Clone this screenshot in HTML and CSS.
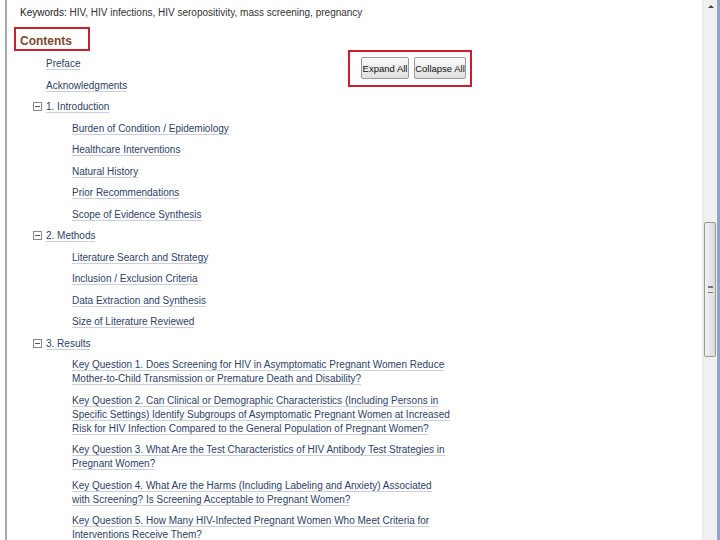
FILE: index.html
```html
<!DOCTYPE html>
<html lang="en">
<head>
<meta charset="utf-8" />
<title>Contents</title>
<link rel="stylesheet" href="styles.css">
</head>
<body>
<div class="window">
	<div class="page">
		<p class="keywords"><span class="kw_label">Keywords:</span> HIV, HIV infections, HIV seropositivity, mass screening, pregnancy</p>
		<div class="toc_area">
			<h2 class="contents_title">Contents</h2>
			<!-- S 展开/折叠 -->
			<div class="toc_tools">
				<button class="bt_tool bt_expand">Expand All</button>
				<button class="bt_tool bt_collapse">Collapse All</button>
			</div>
			<!-- E 展开/折叠 -->
			<ul class="toc">
				<li><a href="#">Preface</a></li>
				<li><a href="#">Acknowledgments</a></li>
				<li class="open"><span class="toggle"><svg width="9" height="9" viewBox="0 0 9 9"><rect x="0.5" y="0.5" width="8" height="8" fill="#fff" stroke="#8a8a8a"/><path d="M2 4.5h5" stroke="#555"/></svg></span><a href="#">1. Introduction</a>
					<ul class="toc_sub">
						<li><a href="#">Burden of Condition / Epidemiology</a></li>
						<li><a href="#">Healthcare Interventions</a></li>
						<li><a href="#">Natural History</a></li>
						<li><a href="#">Prior Recommendations</a></li>
						<li><a href="#">Scope of Evidence Synthesis</a></li>
					</ul>
				</li>
				<li class="open"><span class="toggle"><svg width="9" height="9" viewBox="0 0 9 9"><rect x="0.5" y="0.5" width="8" height="8" fill="#fff" stroke="#8a8a8a"/><path d="M2 4.5h5" stroke="#555"/></svg></span><a href="#">2. Methods</a>
					<ul class="toc_sub">
						<li><a href="#">Literature Search and Strategy</a></li>
						<li><a href="#">Inclusion / Exclusion Criteria</a></li>
						<li><a href="#">Data Extraction and Synthesis</a></li>
						<li><a href="#">Size of Literature Reviewed</a></li>
					</ul>
				</li>
				<li class="open"><span class="toggle"><svg width="9" height="9" viewBox="0 0 9 9"><rect x="0.5" y="0.5" width="8" height="8" fill="#fff" stroke="#8a8a8a"/><path d="M2 4.5h5" stroke="#555"/></svg></span><a href="#">3. Results</a>
					<ul class="toc_sub">
						<li><a href="#">Key Question 1. Does Screening for HIV in Asymptomatic Pregnant Women Reduce Mother-to-Child Transmission or Premature Death and Disability?</a></li>
						<li><a href="#">Key Question 2. Can Clinical or Demographic Characteristics (Including Persons in Specific Settings) Identify Subgroups of Asymptomatic Pregnant Women at Increased Risk for HIV Infection Compared to the General Population of Pregnant Women?</a></li>
						<li><a href="#">Key Question 3. What Are the Test Characteristics of HIV Antibody Test Strategies in Pregnant Women?</a></li>
						<li><a href="#">Key Question 4. What Are the Harms (Including Labeling and Anxiety) Associated with Screening? Is Screening Acceptable to Pregnant Women?</a></li>
						<li><a href="#">Key Question 5. How Many HIV-Infected Pregnant Women Who Meet Criteria for Interventions Receive Them?</a></li>
					</ul>
				</li>
			</ul>
		</div>
	</div>
	<!-- S 滚动条 -->
	<div class="scrollbar">
		<div class="sb_arrow"></div>
		<div class="sb_track_top"></div>
		<div class="sb_thumb"><span class="sb_grip"></span></div>
	</div>
	<!-- E 滚动条 -->
</div>
</body>
</html>
```

FILE: styles.css
```css
html,body{margin:0;padding:0;background:#FFFFFF;}
body{font-family:"Liberation Sans",Arial,sans-serif;font-size:10px;line-height:14px;color:#333333;}

.window{display:flex;width:720px;height:540px;overflow:hidden;}
.page{flex:1;margin-left:5px;padding:6px 0 0 13px;border-left:2px solid #A9A9A9;}

.keywords{margin:0;color:#333333;}
.keywords .kw_label{color:#1A1A1A;}

.toc_area{width:452px;}
.contents_title{width:max-content;margin:7px 0 0 -6px;padding:5px 16px 1px 4px;border:2px solid #C8202F;font-size:12px;line-height:14px;font-weight:bold;color:#7B4A2E;}

/* S 工具按钮 */
.toc_tools{float:right;display:flex;gap:5px;margin-top:-1px;padding:5px 4px 6px 11px;border:2px solid #C8202F;}
.bt_tool{height:22px;padding:0;border:1px solid #9A9A9A;border-radius:2px;background:linear-gradient(#FAFAFA,#E0E0E0);font-family:"Liberation Sans",Arial,sans-serif;font-size:9.5px;color:#111111;}
.bt_expand{width:48px;}
.bt_collapse{width:52px;}
/* E 工具按钮 */

/* S 目录 */
.toc,.toc_sub{margin:0;padding:0 0 0 26px;list-style:none;}
.toc li{margin-top:7.5px;}
.toc > li:first-child{margin-top:6px;}
.toc_sub li{max-width:379.5px;}
.toc a:link,.toc a:visited{color:#2E3F66;text-decoration:none;border-bottom:1px solid #C9D1DE;}
.toc .toggle{display:inline-block;width:9px;height:9px;margin:0 4px 0 -13px;vertical-align:-1px;}
.toc .toggle svg{display:block;}
/* E 目录 */

/* S 滚动条 */
.scrollbar{display:flex;flex-direction:column;width:14px;background:#F0F0F0;border-left:1px solid #E8E8E8;border-right:3px solid #8FA3C2;}
.sb_arrow{height:17px;position:relative;}
.sb_arrow:after{content:"";position:absolute;left:5px;top:5px;border:3px solid transparent;border-bottom:3px solid #444444;border-top:0;}
.sb_track_top{height:205px;}
.sb_thumb{display:flex;align-items:center;justify-content:center;height:133px;margin:0 1px 0 1px;border:1px solid #9A9A9A;border-radius:2px;background:linear-gradient(90deg,#F2F2F2,#DADADA);}
.sb_grip{width:5px;height:5px;border-top:1px solid #777777;border-bottom:1px solid #777777;box-shadow:inset 0 2px 0 -1px #777777;}
/* E 滚动条 */
```
